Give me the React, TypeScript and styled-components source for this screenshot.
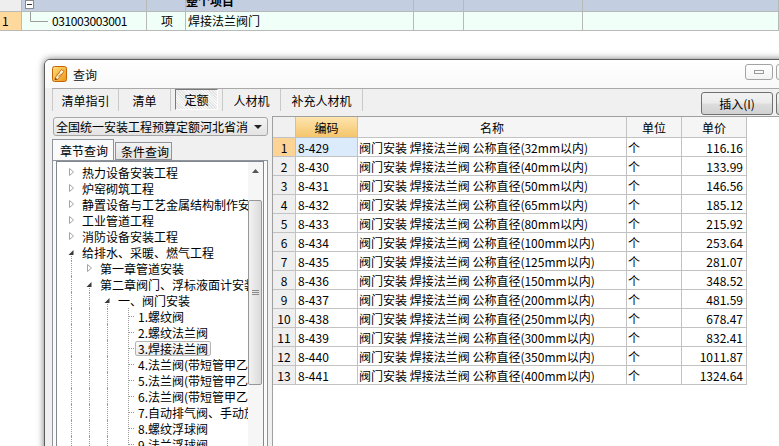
import styled, { createGlobalStyle, css } from "styled-components";

const GlobalStyle = createGlobalStyle`
  *, *::before, *::after {
    box-sizing: border-box;
  }
  html, body {
    margin: 0;
    padding: 0;
  }
  body {
    width: 779px;
    height: 446px;
    overflow: hidden;
    background: #ffffff;
    font-family: "Noto Sans CJK SC", "Liberation Sans", sans-serif;
    font-size: 12px;
    color: #000;
  }
`;

const Page = styled.div`
  width: 779px;
  height: 446px;
  overflow: hidden;
`;

/* ---------- sheet behind the dialog ---------- */

const SheetRow = styled.div<{ $head?: boolean }>`
  display: grid;
  grid-template-columns: 22px 125px 39px 228px 50px 119px 196px;
  height: ${(p) => (p.$head ? 12 : 19)}px;
  background: ${(p) => (p.$head ? "#c3cee0" : "#f0fff8")};
  border-bottom: 1px solid #b9b9b9;
`;

const SheetCell = styled.div<{ $head?: boolean; $bg?: string; $center?: boolean }>`
  display: flex;
  align-items: ${(p) => (p.$head ? "flex-end" : "center")};
  justify-content: ${(p) => (p.$center ? "center" : "flex-start")};
  padding: ${(p) => (p.$head ? "0 0 4px 0" : "0 0 0 2px")};
  border-right: 1px solid #b9b9b9;
  background: ${(p) => p.$bg || "transparent"};
  line-height: 12px;
  white-space: nowrap;
  overflow: hidden;
  font-weight: ${(p) => (p.$head ? 700 : 400)};
`;

const CollapseBox = styled.span`
  width: 9px;
  height: 9px;
  margin-left: 3px;
  margin-bottom: -2px;
  border: 1px solid #8a8a8a;
  background: #fff;
  display: flex;
  align-items: center;
  justify-content: center;
  &::before {
    content: "";
    width: 5px;
    border-top: 1px solid #333;
  }
`;

const CodeText = styled.span`
  margin-left: 4px;
  letter-spacing: -0.4px;
`;

/* ---------- dialog ---------- */

const Dialog = styled.div`
  margin: 28px 0 0 44px;
  width: 780px;
  height: 430px;
  border: 1px solid #5c5c5c;
  border-radius: 6px 6px 0 0;
  background: #f4f4f4;
  box-shadow: 0 0 7px rgba(0, 0, 0, 0.55);
  display: flex;
  flex-direction: column;
  overflow: hidden;
`;

const TitleBar = styled.div`
  height: 28px;
  flex: none;
  display: flex;
  align-items: center;
  padding: 0 19px 0 7px;
  background: linear-gradient(#ffffff, #f8f8f8);
`;

const TitleText = styled.span`
  margin-left: 6px;
  color: #111;
`;

const Spacer = styled.div`
  flex: 1;
`;

const WinButton = styled.div`
  width: 28px;
  height: 16px;
  margin-top: -4px;
  margin-left: 3px;
  border: 1px solid #a3a3a3;
  border-radius: 3px;
  background: linear-gradient(#ffffff, #f3f3f3);
  display: flex;
  align-items: center;
  justify-content: center;
  &::before {
    content: "";
    width: 10px;
    height: 4px;
    border: 1px solid #9a9a9a;
  }
`;

const Body = styled.div`
  flex: 1;
  display: flex;
  flex-direction: column;
  padding: 0 7px;
  background: #f0f0f0;
  min-height: 0;
`;

const ToolRow = styled.div`
  height: 28px;
  flex: none;
  display: flex;
  align-items: flex-start;
  border-top: 1px solid #a9a9a9;
`;

const Tabs = styled.div`
  display: flex;
  height: 22px;
  border-left: 1px solid #c9c9c9;
`;

const Tab = styled.div<{ $w: number }>`
  width: ${(p) => p.$w}px;
  height: 22px;
  display: flex;
  align-items: center;
  justify-content: center;
  border-right: 1px solid #c9c9c9;
`;

const ActiveTab = styled.div`
  flex: 1;
  align-self: stretch;
  margin: 0 4px 1px;
  display: flex;
  align-items: center;
  justify-content: center;
  border: 1px solid;
  border-color: #7a7a7a #ffffff #ffffff #7a7a7a;
  background-color: #f4f4f4;
  background-image: repeating-linear-gradient(45deg, #e4e4e4 0 1px, #f8f8f8 1px 2px);
`;

const PushButton = styled.div<{ $w: number }>`
  width: ${(p) => p.$w}px;
  height: 23px;
  margin-top: 3px;
  margin-left: 3px;
  border: 1px solid #707070;
  border-radius: 3px;
  background: linear-gradient(#f3f3f3 0%, #ebebeb 48%, #dddddd 52%, #d1d1d1 100%);
  display: flex;
  align-items: center;
  justify-content: center;
`;

const Content = styled.div`
  flex: 1;
  display: flex;
  min-height: 0;
`;

/* ---------- left panel ---------- */

const LeftPanel = styled.div`
  width: 216px;
  flex: none;
  display: flex;
  flex-direction: column;
`;

const Combo = styled.div`
  margin: 1px 0 0 1px;
  height: 19px;
  flex: none;
  display: flex;
  align-items: center;
  padding: 0 5px 0 2px;
  border: 1px solid #a7a7a7;
  border-radius: 3px;
  background: linear-gradient(#f4f4f4, #e3e3e3);
`;

const ComboText = styled.span`
  width: 192px;
  overflow: hidden;
  white-space: nowrap;
`;

const TabHeads = styled.div`
  margin-top: 3px;
  height: 21px;
  flex: none;
  display: flex;
  align-items: flex-end;
`;

const SideTab = styled.div<{ $active?: boolean }>`
  display: flex;
  align-items: center;
  white-space: nowrap;
  border: 1px solid #8f939c;
  border-bottom: none;
  ${(p) =>
    p.$active
      ? css`
          width: 62px;
          height: 21px;
          padding-left: 7px;
          background: #fafafa;
        `
      : css`
          width: 57px;
          height: 18px;
          margin-left: 1px;
          padding-left: 5px;
          border-bottom: 1px solid #8f939c;
          background: linear-gradient(#f2f2f2, #e2e2e2);
        `}
`;

const TabPage = styled.div`
  flex: 1;
  display: flex;
  min-height: 0;
  padding: 0 3px;
  border: 1px solid #8f939c;
  border-bottom: none;
  background: #fafafa;
`;

const TreeBox = styled.div`
  flex: 1;
  display: flex;
  min-width: 0;
  border: 1px solid #828790;
  border-bottom: none;
  background: #ffffff;
`;

const TreeList = styled.div`
  flex: 1;
  min-width: 0;
  overflow: hidden;
  padding-top: 2px;
`;

const TreeRow = styled.div`
  height: 16px;
  display: flex;
  align-items: center;
  padding-left: 10px;
  white-space: nowrap;
`;

const Indent = styled.span<{ $line: boolean }>`
  width: 18px;
  height: 16px;
  flex: none;
  display: flex;
  ${(p) =>
    p.$line &&
    css`
      &::before {
        content: "";
        margin-left: 4px;
        border-left: 1px dotted #9a9a9a;
      }
    `}
`;

const NodeLabel = styled.span<{ $selected?: boolean }>`
  line-height: 13px;
  padding: 0 2px;
  border: 1px solid transparent;
  border-radius: 2px;
  ${(p) =>
    p.$selected &&
    css`
      border-color: #b5b5b5;
      background: linear-gradient(#fbfbfb, #ebebeb);
    `}
`;

const ScrollBar = styled.div`
  width: 15px;
  flex: none;
  display: flex;
  flex-direction: column;
  align-items: flex-start;
  background: #f6f6f6;
`;

const ScrollArrow = styled.div`
  width: 15px;
  height: 17px;
  display: flex;
  align-items: center;
  justify-content: center;
`;

const ScrollThumb = styled.div`
  margin-top: 21px;
  width: 14px;
  height: 185px;
  border: 1px solid #979797;
  border-radius: 2px;
  background: linear-gradient(to right, #f3f3f3, #dadada);
  display: flex;
  align-items: center;
  justify-content: center;
`;

/* ---------- result grid ---------- */

const GridPanel = styled.div`
  flex: 1;
  margin-left: 4px;
  border-left: 1px solid #a0a0a0;
  border-top: 1px solid #a0a0a0;
  background: #ffffff;
`;

const GridRow = styled.div<{ $head?: boolean }>`
  display: grid;
  grid-template-columns: 23px 62px 269px 55px 65px;
  height: ${(p) => (p.$head ? 21 : 19)}px;
`;

const GridCell = styled.div<{ $bg?: string; $align?: "left" | "center" | "right"; $pad?: number }>`
  display: flex;
  align-items: center;
  justify-content: ${(p) =>
    p.$align === "center" ? "center" : p.$align === "right" ? "flex-end" : "flex-start"};
  padding: 0 ${(p) => (p.$align === "right" ? p.$pad ?? 3 : 0)}px 0
    ${(p) => (p.$align === "left" ? p.$pad ?? 1 : 0)}px;
  border-right: 1px solid #c2c2c2;
  border-bottom: 1px solid #c2c2c2;
  background: ${(p) => p.$bg || "#ffffff"};
  white-space: nowrap;
  overflow: hidden;
`;

/* ---------- drawings ---------- */

function AppIcon() {
  return (
    <svg width="15" height="16" viewBox="0 0 15 16">
      <defs>
        <linearGradient id="ig" x1="0" y1="0" x2="1" y2="1">
          <stop offset="0" stopColor="#ffe07a" />
          <stop offset="1" stopColor="#ef9417" />
        </linearGradient>
      </defs>
      <rect x="0.5" y="0.5" width="14" height="15" rx="2" fill="url(#ig)" stroke="#c2650a" />
      <path d="M3 12 L9.5 3.5 L12 5.5 L5.5 13.5 Z" fill="#fff6dc" stroke="#b45a08" strokeWidth="0.8" />
      <path d="M3 12 L2.5 14 L5.5 13.5" fill="#7a3b05" />
      <path d="M4.5 9 L8 6.5 M6 10.5 L9.5 8" stroke="#d07a1c" strokeWidth="0.8" />
    </svg>
  );
}

function Expander({ open }: { open: boolean }) {
  return (
    <svg width="12" height="16" viewBox="0 0 12 16" style={{ flex: "none" }}>
      {open ? (
        <>
          <polygon points="1.5,11 6.5,6 6.5,11" fill="#3a3a3a" />
          <line x1="4.5" y1="12" x2="4.5" y2="16" stroke="#9a9a9a" strokeDasharray="1 1" />
        </>
      ) : (
        <polygon points="2.5,4.5 6.5,8 2.5,11.5" fill="#ffffff" stroke="#a3a3a3" />
      )}
    </svg>
  );
}

function Connector() {
  return (
    <svg width="14" height="16" viewBox="0 0 14 16" style={{ flex: "none" }}>
      <line x1="7.5" y1="0" x2="7.5" y2="16" stroke="#9a9a9a" strokeDasharray="1 1" />
      <line x1="8" y1="8.5" x2="14" y2="8.5" stroke="#9a9a9a" strokeDasharray="1 1" />
    </svg>
  );
}

function SheetTreeLine() {
  return (
    <svg width="26" height="18" viewBox="0 0 26 18" style={{ flex: "none", alignSelf: "flex-start" }}>
      <line x1="8.5" y1="0" x2="8.5" y2="9.5" stroke="#9c9c9c" />
      <line x1="8.5" y1="9.5" x2="26" y2="9.5" stroke="#9c9c9c" />
    </svg>
  );
}

/* ---------- data ---------- */

type TreeNode = {
  label: string;
  level: number;
  kind: "closed" | "open" | "leaf";
  guides: number[];
  selected?: boolean;
};

const leafGuides = [0, 1, 2];

const treeData: TreeNode[] = [
  { label: "热力设备安装工程", level: 0, kind: "closed", guides: [] },
  { label: "炉窑砌筑工程", level: 0, kind: "closed", guides: [] },
  { label: "静置设备与工艺金属结构制作安装工程", level: 0, kind: "closed", guides: [] },
  { label: "工业管道工程", level: 0, kind: "closed", guides: [] },
  { label: "消防设备安装工程", level: 0, kind: "closed", guides: [] },
  { label: "给排水、采暖、燃气工程", level: 0, kind: "open", guides: [] },
  { label: "第一章管道安装", level: 1, kind: "closed", guides: [0] },
  { label: "第二章阀门、浮标液面计安装", level: 1, kind: "open", guides: [0] },
  { label: "一、阀门安装", level: 2, kind: "open", guides: [0, 1] },
  { label: "1.螺纹阀", level: 3, kind: "leaf", guides: leafGuides },
  { label: "2.螺纹法兰阀", level: 3, kind: "leaf", guides: leafGuides },
  { label: "3.焊接法兰阀", level: 3, kind: "leaf", guides: leafGuides, selected: true },
  { label: "4.法兰阀(带短管甲乙)", level: 3, kind: "leaf", guides: leafGuides },
  { label: "5.法兰阀(带短管甲乙)", level: 3, kind: "leaf", guides: leafGuides },
  { label: "6.法兰阀(带短管甲乙)", level: 3, kind: "leaf", guides: leafGuides },
  { label: "7.自动排气阀、手动放风阀", level: 3, kind: "leaf", guides: leafGuides },
  { label: "8.螺纹浮球阀", level: 3, kind: "leaf", guides: leafGuides },
  { label: "9.法兰浮球阀", level: 3, kind: "leaf", guides: leafGuides },
];

const quotas = [
  ["8-429", "32", "116.16"],
  ["8-430", "40", "133.99"],
  ["8-431", "50", "146.56"],
  ["8-432", "65", "185.12"],
  ["8-433", "80", "215.92"],
  ["8-434", "100", "253.64"],
  ["8-435", "125", "281.07"],
  ["8-436", "150", "348.52"],
  ["8-437", "200", "481.59"],
  ["8-438", "250", "678.47"],
  ["8-439", "300", "832.41"],
  ["8-440", "350", "1011.87"],
  ["8-441", "400", "1324.64"],
];

const topTabs = [
  { label: "清单指引", w: 66 },
  { label: "清单", w: 52 },
  { label: "定额", w: 52, active: true },
  { label: "人材机", w: 58 },
  { label: "补充人材机", w: 82 },
];

export default function App() {
  return (
    <Page>
      <GlobalStyle />

      <SheetRow $head>
        <SheetCell $head $bg="#eeeeee" />
        <SheetCell $head>
          <CollapseBox />
        </SheetCell>
        <SheetCell $head />
        <SheetCell $head>整个项目</SheetCell>
        <SheetCell $head />
        <SheetCell $head />
        <SheetCell $head />
      </SheetRow>
      <SheetRow>
        <SheetCell $bg="#ffd89b">1</SheetCell>
        <SheetCell style={{ paddingLeft: 0 }}>
          <SheetTreeLine />
          <CodeText>031003003001</CodeText>
        </SheetCell>
        <SheetCell $center>项</SheetCell>
        <SheetCell>焊接法兰阀门</SheetCell>
        <SheetCell />
        <SheetCell />
        <SheetCell />
      </SheetRow>

      <Dialog>
        <TitleBar>
          <AppIcon />
          <TitleText>查询</TitleText>
          <Spacer />
          <WinButton />
          <WinButton />
        </TitleBar>

        <Body>
          <ToolRow>
            <Tabs>
              {topTabs.map((t) => (
                <Tab key={t.label} $w={t.w}>
                  {t.active ? <ActiveTab>{t.label}</ActiveTab> : t.label}
                </Tab>
              ))}
            </Tabs>
            <Spacer />
            <PushButton $w={72}>插入(I)</PushButton>
            <PushButton $w={40} />
          </ToolRow>

          <Content>
            <LeftPanel>
              <Combo>
                <ComboText>全国统一安装工程预算定额河北省消耗量定额</ComboText>
                <Spacer />
                <svg width="8" height="4" viewBox="0 0 8 4">
                  <polygon points="0,0 8,0 4,4" fill="#222" />
                </svg>
              </Combo>
              <TabHeads>
                <SideTab $active>章节查询</SideTab>
                <SideTab>条件查询</SideTab>
              </TabHeads>
              <TabPage>
                <TreeBox>
                  <TreeList>
                    {treeData.map((node) => (
                      <TreeRow key={node.label}>
                        {Array.from({ length: node.level }).map((_, i) => (
                          <Indent key={i} $line={node.guides.includes(i)} />
                        ))}
                        {node.kind === "leaf" ? (
                          <Connector />
                        ) : (
                          <Expander open={node.kind === "open"} />
                        )}
                        <NodeLabel $selected={node.selected}>{node.label}</NodeLabel>
                      </TreeRow>
                    ))}
                  </TreeList>
                  <ScrollBar>
                    <ScrollArrow>
                      <svg width="7" height="4" viewBox="0 0 7 4">
                        <polygon points="0,4 7,4 3.5,0" fill="#555" />
                      </svg>
                    </ScrollArrow>
                    <ScrollThumb>
                      <svg width="7" height="6" viewBox="0 0 7 6">
                        <path d="M0 0.5 H7 M0 2.5 H7 M0 4.5 H7" stroke="#8a8a8a" />
                      </svg>
                    </ScrollThumb>
                  </ScrollBar>
                </TreeBox>
              </TabPage>
            </LeftPanel>

            <GridPanel>
              <GridRow $head>
                <GridCell $bg="#f0f0f0" />
                <GridCell $align="center" $bg="linear-gradient(#fde4ae, #f5c56c)">
                  编码
                </GridCell>
                <GridCell $align="center" $bg="#f5f5f5">
                  名称
                </GridCell>
                <GridCell $align="center" $bg="#f5f5f5">
                  单位
                </GridCell>
                <GridCell $align="center" $bg="#f5f5f5">
                  单价
                </GridCell>
              </GridRow>
              {quotas.map(([code, size, price], i) => (
                <GridRow key={code}>
                  <GridCell $align="center" $bg={i === 0 ? "#fdd496" : "#efefef"}>
                    {i + 1}
                  </GridCell>
                  <GridCell $align="left" $pad={2} $bg={i === 0 ? "#dcebfc" : undefined}>
                    {code}
                  </GridCell>
                  <GridCell $align="left">
                    阀门安装 焊接法兰阀 公称直径({size}mm以内)
                  </GridCell>
                  <GridCell $align="left">个</GridCell>
                  <GridCell $align="right">{price}</GridCell>
                </GridRow>
              ))}
            </GridPanel>
          </Content>
        </Body>
      </Dialog>
    </Page>
  );
}
